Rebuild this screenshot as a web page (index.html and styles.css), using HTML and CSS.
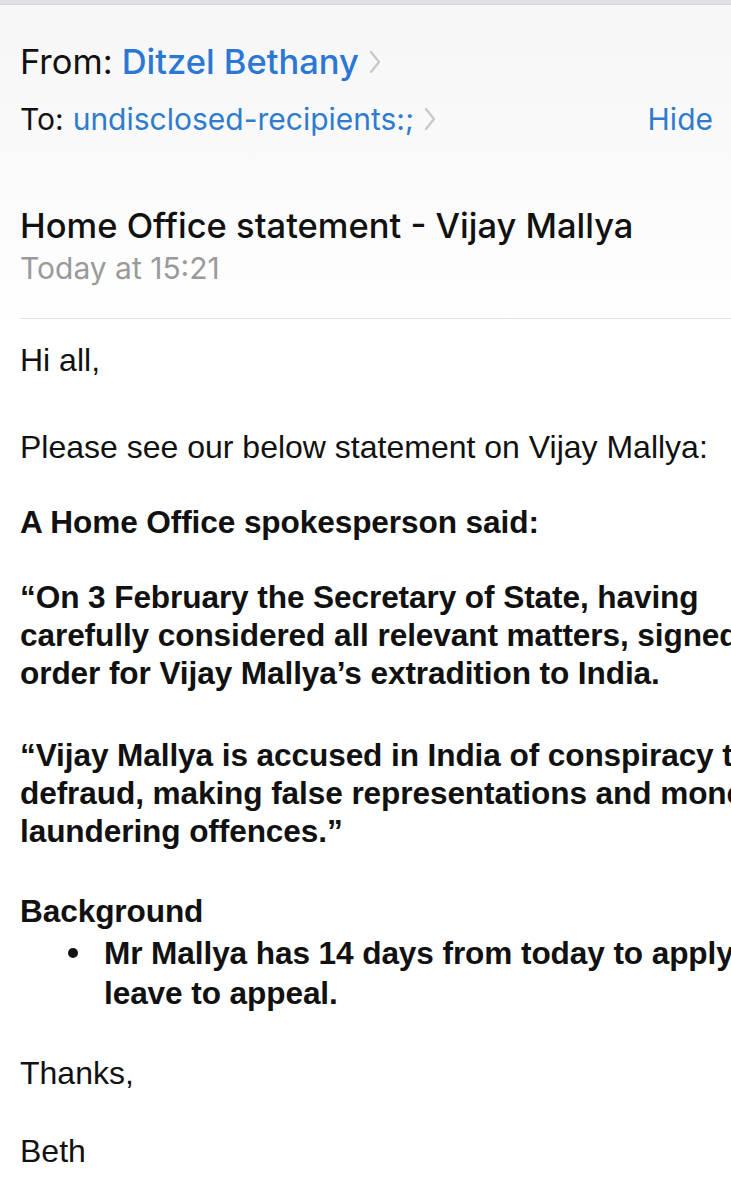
FILE: index.html
```html
<!DOCTYPE html>
<html>
<head>
<meta charset="utf-8">
<link rel="stylesheet" href="styles.css">
</head>
<body>
<div class="topbar"></div>
<div class="page">
  <header class="head">
    <div class="row row-from">
      <span class="label">From:</span>
      <span class="sender">Ditzel Bethany</span>
      <svg class="chev" viewBox="0 0 12 24" width="12" height="24"><polyline points="2,2 10,12 2,22" fill="none" stroke="#c7c7cc" stroke-width="2.2" stroke-linecap="round" stroke-linejoin="round"/></svg>
    </div>
    <div class="row row-to">
      <span class="label">To:</span>
      <span class="recip">undisclosed-recipients:;</span>
      <svg class="chev" viewBox="0 0 12 24" width="12" height="24"><polyline points="2,2 10,12 2,22" fill="none" stroke="#c7c7cc" stroke-width="2.2" stroke-linecap="round" stroke-linejoin="round"/></svg>
      <span class="hide">Hide</span>
    </div>
    <div class="subject">Home Office statement - Vijay Mallya</div>
    <div class="date">Today at 15:21</div>
  </header>
  <div class="sep"></div>
  <main class="mail">
    <p class="p hi">Hi all,</p>
    <p class="p please">Please see our below statement on Vijay Mallya:</p>
    <p class="p b said">A Home Office spokesperson said:</p>
    <p class="p b q1"><span class="ln">“On 3 February the Secretary of State, having</span><span class="ln">carefully considered all relevant matters, signed the</span><span class="ln">order for Vijay Mallya’s extradition to India.</span></p>
    <p class="p b q2"><span class="ln">“Vijay Mallya is accused in India of conspiracy to</span><span class="ln">defraud, making false representations and money</span><span class="ln">laundering offences.”</span></p>
    <p class="p b bg">Background</p>
    <div class="bullet b">
      <span class="dot"></span>
      <div class="btext"><span class="ln">Mr Mallya has 14 days from today to apply for</span><span class="ln">leave to appeal.</span></div>
    </div>
    <p class="p thanks">Thanks,</p>
    <p class="p beth">Beth</p>
  </main>
</div>
</body>
</html>
```

FILE: styles.css
```css
html, body {
  margin: 0;
  padding: 0;
  background: #ffffff;
  overflow: hidden;
}
body {
  width: 731px;
  height: 1200px;
  color: #111111;
}
.topbar {
  height: 4px;
  background: #e1e1e5;
  border-bottom: 1px solid #d6d6da;
}
.page {
  background: linear-gradient(#f6f6f6 0px, #fafafa 160px, #ffffff 320px);
}
.head {
  padding: 37px 18px 0 20px;
  font-family: Inter, "Liberation Sans", sans-serif;
}
.row {
  display: flex;
  align-items: center;
  height: 40px;
  line-height: 40px;
  white-space: nowrap;
}
.row-from {
  font-size: 34.5px;
}
.row-to {
  margin-top: 17px;
  font-size: 30px;
}
.label {
  color: #111111;
  margin-right: 9px;
}
.sender {
  color: #2b78d4;
  font-weight: 500;
}
.recip {
  color: #2f7ccf;
}
.chev {
  margin-left: 10px;
}
.hide {
  margin-left: auto;
  color: #2f7ccf;
}
.subject {
  margin-top: 67px;
  height: 40px;
  line-height: 40px;
  font-size: 34.5px;
  font-weight: 500;
  color: #111111;
  white-space: nowrap;
}
.date {
  margin-top: 4px;
  height: 36px;
  line-height: 36px;
  font-size: 30px;
  color: #9a9a9a;
}
.sep {
  margin: 32px 0 0 20px;
  height: 1px;
  background: #e3e3e3;
}
.mail {
  padding: 0 0 0 20px;
  font-family: "Liberation Sans", Arial, sans-serif;
  font-size: 32px;
  line-height: 38px;
  color: #111111;
  white-space: nowrap;
}
.p { margin: 0; }
.b { font-size: 31.6px; font-weight: bold; letter-spacing: -0.1px; }
.ln { display: block; }
.hi { margin-top: 22px; }
.please { margin-top: 49px; }
.said { margin-top: 37px; }
.q1 { margin-top: 37px; }
.q2 { margin-top: 44px; }
.bg { margin-top: 42px; }
.bullet {
  margin-top: 3px;
  display: flex;
  line-height: 40px;
}
.dot {
  width: 10px;
  height: 10px;
  border-radius: 50%;
  background: #111111;
  margin: 15px 26px 0 48px;
  flex: none;
}
.thanks { margin-top: 41px; }
.beth { margin-top: 40px; }
```
